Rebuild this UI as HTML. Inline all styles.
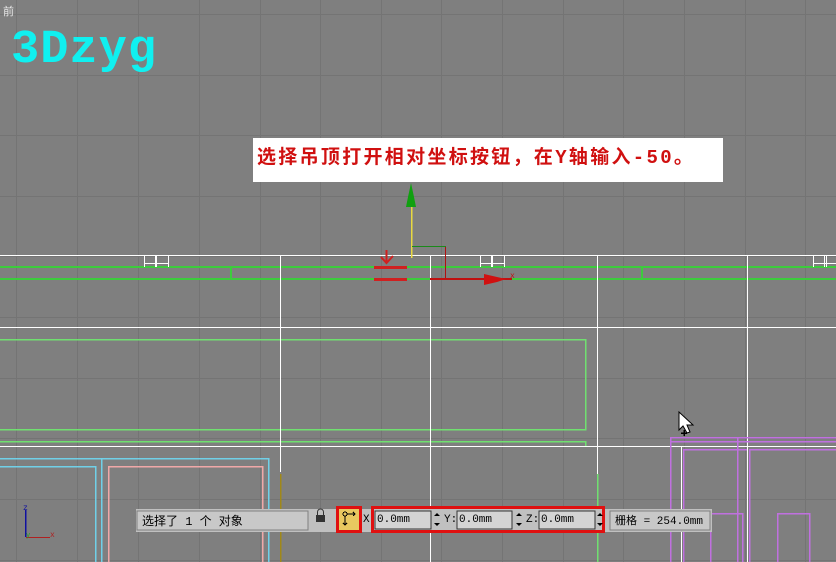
<!DOCTYPE html>
<html><head><meta charset="utf-8"><style>
html,body{margin:0;padding:0;width:836px;height:562px;overflow:hidden;background:#7f7f7f;}
svg{position:absolute;left:0;top:0}
.t{position:absolute;white-space:nowrap}
</style></head><body>
<svg width="836" height="562" xmlns="http://www.w3.org/2000/svg" shape-rendering="crispEdges">
<g stroke="#747474" stroke-width="1">
<line x1="16.5" y1="0" x2="16.5" y2="562"/><line x1="77.5" y1="0" x2="77.5" y2="562"/><line x1="138.5" y1="0" x2="138.5" y2="562"/><line x1="199.5" y1="0" x2="199.5" y2="562"/><line x1="260.5" y1="0" x2="260.5" y2="562"/><line x1="320.5" y1="0" x2="320.5" y2="562"/><line x1="381.5" y1="0" x2="381.5" y2="562"/><line x1="441.5" y1="0" x2="441.5" y2="562"/><line x1="502.5" y1="0" x2="502.5" y2="562"/><line x1="563.5" y1="0" x2="563.5" y2="562"/><line x1="623.5" y1="0" x2="623.5" y2="562"/><line x1="684.5" y1="0" x2="684.5" y2="562"/><line x1="745.5" y1="0" x2="745.5" y2="562"/><line x1="805.5" y1="0" x2="805.5" y2="562"/>
<line x1="0" y1="14.5" x2="836" y2="14.5"/><line x1="0" y1="75.5" x2="836" y2="75.5"/><line x1="0" y1="135.5" x2="836" y2="135.5"/><line x1="0" y1="196.5" x2="836" y2="196.5"/><line x1="0" y1="256.5" x2="836" y2="256.5"/><line x1="0" y1="317.5" x2="836" y2="317.5"/><line x1="0" y1="378.5" x2="836" y2="378.5"/><line x1="0" y1="438.5" x2="836" y2="438.5"/><line x1="0" y1="499.5" x2="836" y2="499.5"/><line x1="0" y1="560.5" x2="836" y2="560.5"/>
</g>
<g stroke="#3ccc3c" stroke-width="2" fill="none">
<line x1="0" y1="267" x2="836" y2="267"/><line x1="0" y1="279" x2="836" y2="279"/>
<line x1="231" y1="267" x2="231" y2="280"/><line x1="642" y1="267" x2="642" y2="280"/>
</g>
<g stroke="#70e070" stroke-width="1.5" fill="none">
<polyline points="0,339.5 585.5,339.5 585.5,429.5 0,429.5"/>
<polyline points="0,441.5 585.5,441.5 585.5,446"/>
<line x1="597.5" y1="474" x2="597.5" y2="562"/>
</g>
<g stroke="#ffffff" stroke-width="1.2" fill="none">
<line x1="0" y1="255.5" x2="836" y2="255.5"/><line x1="0" y1="327.5" x2="836" y2="327.5"/><line x1="0" y1="446.5" x2="836" y2="446.5"/>
<line x1="280.5" y1="255" x2="280.5" y2="472"/><line x1="430.5" y1="255" x2="430.5" y2="562"/><line x1="597.5" y1="255" x2="597.5" y2="474"/><line x1="747.5" y1="255" x2="747.5" y2="562"/><line x1="681.5" y1="446" x2="681.5" y2="562"/>
<path d="M144.5,255V267M155.5,255V267M156.5,255V267M168.5,255V267M144,263.5H168"/>
<path d="M480.5,255V267M491.5,255V267M492.5,255V267M504.5,255V267M480,263.5H504"/>
<path d="M813.5,255V267M824.5,255V267M826.5,255V267M813,263.5H836"/>
</g>
<g fill="none" stroke-width="1.5">
<polyline stroke="#70d0e8" points="0,458.5 268.5,458.5 268.5,562"/>
<line stroke="#70d0e8" x1="101.5" y1="458" x2="101.5" y2="562"/>
<polyline stroke="#70d0e8" points="0,466.5 95.5,466.5 95.5,562"/>
<polyline stroke="#f0a8a8" points="108.5,562 108.5,466.5 262.5,466.5 262.5,562"/>
<line stroke="#a08818" x1="280.5" y1="474" x2="280.5" y2="562"/>
</g>
<g fill="none" stroke="#c070e0" stroke-width="1.5">
<line x1="670" y1="437.5" x2="836" y2="437.5"/><line x1="670" y1="441.5" x2="836" y2="441.5"/>
<line x1="670.5" y1="437" x2="670.5" y2="562"/><line x1="737.5" y1="437" x2="737.5" y2="562"/>
<polyline points="683.5,562 683.5,449.5 747,449.5"/><polyline points="749.5,562 749.5,449.5 836,449.5"/>
<polyline points="710.5,562 710.5,513.5 742.5,513.5 742.5,562"/><polyline points="777.5,562 777.5,513.5 809.5,513.5 809.5,562"/>
</g>
<line x1="411.5" y1="207" x2="411.5" y2="258" stroke="#e8d840" stroke-width="1.5"/>
<polygon points="411,183 414,197 416,207 406,207 408,197" fill="#10a010" shape-rendering="auto"/>
<polyline points="412,246.5 445.5,246.5 445.5,279" fill="none" stroke="#1a8a1a" stroke-width="1.2"/>
<line x1="445.5" y1="247" x2="445.5" y2="279" stroke="#b01010" stroke-width="1.2"/>
<line x1="430" y1="279" x2="512" y2="279" stroke="#c01010" stroke-width="2"/>
<polygon points="484,274 497,277 506,279 497,282 484,285" fill="#d01010" shape-rendering="auto"/>
<text x="510" y="278" font-family="Liberation Mono" font-size="8" fill="#c01010">x</text>
<rect x="374" y="266" width="33" height="3" fill="#d02020"/><rect x="374" y="278" width="33" height="3" fill="#d02020"/>
<path d="M386.5,250V262M381,257L386.5,263L393,256" stroke="#d02020" stroke-width="2" fill="none" shape-rendering="auto"/>
<line x1="25.5" y1="510" x2="25.5" y2="537" stroke="#1010a0" stroke-width="1.5"/>
<line x1="26" y1="537.5" x2="50" y2="537.5" stroke="#b02020" stroke-width="1.2"/>
<text x="23" y="510" font-family="Liberation Mono" font-size="8" fill="#1010a0">z</text>
<text x="50" y="537" font-family="Liberation Mono" font-size="8" fill="#b02020">x</text>
<text x="26" y="537" font-family="Liberation Mono" font-size="7" fill="#20a020">y</text>
<rect x="136" y="509" width="576" height="23" fill="#c0c0c0"/>
<rect x="137" y="511" width="171" height="19" fill="#c8c8c8" stroke="#808080"/>
<rect x="316" y="515" width="9" height="7" fill="#333"/><path d="M317.5,515V512a3,3 0 0 1 6,0V515" fill="none" stroke="#333" shape-rendering="auto"/>
<rect x="336" y="506" width="26" height="27" fill="#e01010"/>
<rect x="339" y="509" width="20" height="21" fill="#e8c860"/>
<circle cx="345" cy="514" r="2" fill="none" stroke="#000"/><path d="M347,514H355M353,512L355,514L353,516M345,516V525M343,523L345,525L347,523" fill="none" stroke="#000"/>
<rect x="371" y="506" width="234" height="27" fill="#e01010"/>
<rect x="374" y="509" width="228" height="21" fill="#c0c0c0"/>
<rect x="375" y="511" width="56" height="18" fill="#d4d4d4" stroke="#333"/>
<rect x="457" y="511" width="55" height="18" fill="#d4d4d4" stroke="#333"/>
<rect x="539" y="511" width="56" height="18" fill="#d4d4d4" stroke="#333"/>
<path d="M434,516l3,-3l3,3zM434,523l3,3l3,-3zM516,516l3,-3l3,3zM516,523l3,3l3,-3zM597,516l3,-3l3,3zM597,523l3,3l3,-3z" fill="#000" shape-rendering="auto"/>
<rect x="610" y="511" width="100" height="19" fill="#c8c8c8" stroke="#808080"/>
<path d="M679,412V430L683,426L687,433L690,432L687,425L693,425Z" fill="#fff" stroke="#000" shape-rendering="auto"/>
<path d="M684,430V436M681,433H687" stroke="#000" stroke-width="1.5"/>
</svg>
<div class="t" style="left:3px;top:3px;font:11px 'Noto Sans CJK SC',sans-serif;color:#e8e8e8">前</div>
<div class="t" style="left:11px;top:24px;font:bold 47px 'Liberation Mono',monospace;color:#10f0f0;letter-spacing:1px">3Dzyg</div>
<div class="t" style="left:253px;top:138px;width:470px;height:44px;background:#fff"></div>
<div class="t" style="left:257px;top:142px;font:bold 19px 'Liberation Mono','Noto Sans CJK SC',monospace;color:#d01010;letter-spacing:2.3px">选择吊顶打开相对坐标按钮，在Y轴输入-50。</div>
<div class="t" style="left:142px;top:512px;font:12px 'Liberation Mono','Noto Sans CJK SC',monospace;color:#000">选择了 1 个 对象</div>
<div class="t" style="left:363px;top:514px;font:11px 'Liberation Mono',monospace;color:#000">X</div>
<div class="t" style="left:377px;top:514px;font:11px 'Liberation Mono',monospace;color:#000">0.0mm</div>
<div class="t" style="left:444px;top:514px;font:11px 'Liberation Mono',monospace;color:#000">Y:</div>
<div class="t" style="left:459px;top:514px;font:11px 'Liberation Mono',monospace;color:#000">0.0mm</div>
<div class="t" style="left:526px;top:514px;font:11px 'Liberation Mono',monospace;color:#000">Z:</div>
<div class="t" style="left:541px;top:514px;font:11px 'Liberation Mono',monospace;color:#000">0.0mm</div>
<div class="t" style="left:615px;top:512px;font:11px 'Liberation Mono','Noto Sans CJK SC',monospace;color:#000">栅格 = 254.0mm</div>
</body></html>
